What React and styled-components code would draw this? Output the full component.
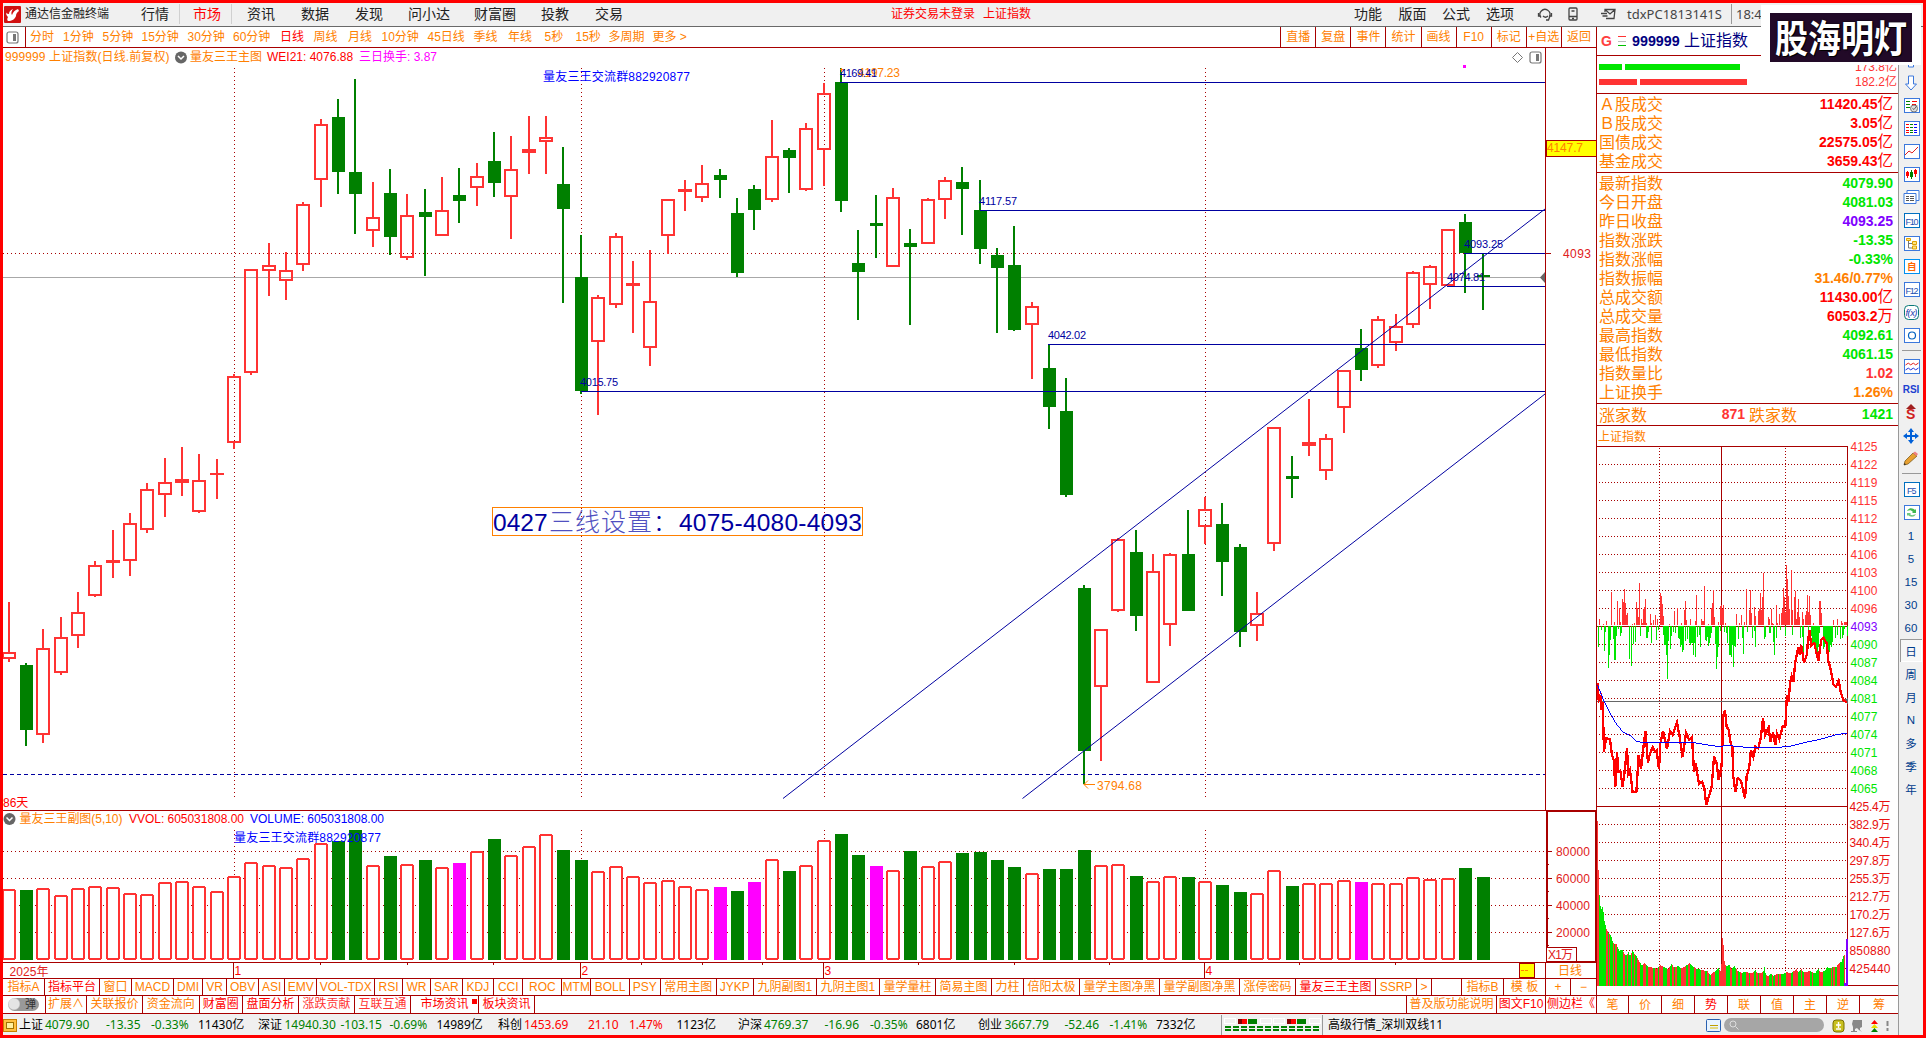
import * as React from 'react'
import styled, { createGlobalStyle } from 'styled-components'

const RED = '#ff3333'
const LINE = '#a80000'
const GREEN = '#008000'
const LIME = '#00e600'
const ORANGE = '#ff8000'
const NAVY = '#0000a0'
const SANS = '"Liberation Sans", "Noto Sans CJK SC", sans-serif'
const UI = '"Noto Sans", "Noto Sans CJK SC", sans-serif'

const GlobalStyle = createGlobalStyle`
  * { box-sizing: border-box; }
  body { margin: 0; background: #fff; }
  svg { display: block; flex: none; overflow: visible; }
  svg text { font-family: ${SANS}; font-size: 12px; }
`
const Frame = styled.div`
  position: relative;
  display: flex;
  flex-direction: column;
  width: 1926px;
  height: 1038px;
  overflow: hidden;
  border: 3px solid #f00;
  background: #fff;
  font: 12px/16px ${SANS};
  white-space: nowrap;
`
const MenuBar = styled.header`
  display: flex;
  flex: none;
  align-items: center;
  height: 24px;
  padding: 0 0 1px 1px;
  background: #f0f0f0;
  border-bottom: 1px solid #696969;
  color: #222;
`
const Brand = styled.div`
  display: flex;
  align-items: center;
  gap: 4px;
  width: 120px;
  font-size: 12px;
`
const MenuItem = styled.div`
  flex: none;
  width: ${p => p.$w}px;
  height: 20px;
  padding-left: ${p => p.$pad ?? 16}px;
  font-size: 14px;
  line-height: 20px;
  color: ${p => (p.$active ? '#f00' : '#222')};
  border-left: 1px solid ${p => (p.$active ? '#d0d0d0' : 'transparent')};
  border-right: 1px solid ${p => (p.$active ? '#d0d0d0' : 'transparent')};
`
const MenuNotice = styled.div`
  display: flex;
  gap: 8px;
  width: 460px;
  color: #f00;
`
const MenuIcon = styled.div`
  display: flex;
  align-items: center;
  width: ${p => p.$w}px;
`
const Account = styled.div`
  width: 105px;
  font: 13px/20px ${UI};
  color: #444;
  border-right: 1px solid #999;
`
const Clock = styled.div`
  padding-left: 4px;
  font: 13px/20px ${UI};
  color: #444;
`
const Body = styled.div`
  display: flex;
  flex: 1;
  min-height: 0;
`
const Main = styled.main`
  display: flex;
  flex-direction: column;
  width: 1895px;
`
const Workspace = styled.div`
  display: flex;
  height: 987px;
`
const ChartColumn = styled.section`
  display: flex;
  flex-direction: column;
  width: 1594px;
  border-right: 1px solid ${LINE};
`
const Toolbar = styled.nav`
  display: flex;
  align-items: center;
  height: 21px;
  border-bottom: 1px solid ${LINE};
  color: ${ORANGE};
`
const ToolIcon = styled.div`
  display: flex;
  align-items: center;
  width: 23px;
  height: 20px;
  padding-left: 3px;
  border-right: 1px solid ${LINE};
`
const Period = styled.div`
  width: ${p => p.$w}px;
  color: ${p => (p.$active ? '#f00' : ORANGE)};
`
const Periods = styled.div`
  display: flex;
  flex: 1;
  padding-left: 4px;
`
const ToolButton = styled.div`
  width: 35.1px;
  height: 20px;
  line-height: 20px;
  text-align: center;
  border-left: 1px solid ${LINE};
`
const InfoLine = styled.div`
  display: flex;
  height: 19px;
`
const InfoText = styled.div`
  display: flex;
  align-items: center;
  width: 1543px;
  padding: 0 0 1px 2px;
  border-right: 1px solid ${LINE};
`
const Info = styled.span`
  width: ${p => p.$w}px;
  letter-spacing: ${p => p.$ls ?? 0}px;
  color: ${p => p.$color};
`
const InfoIcons = styled.div`
  display: flex;
  align-items: center;
  gap: 5px;
  margin-left: auto;
  padding-right: 3px;
`
const TabRow = styled.nav`
  display: flex;
  height: ${p => p.$h}px;
  line-height: ${p => p.$h - 1}px;
  border-bottom: 1px solid ${LINE};
  border-top: ${p => (p.$top ? `1px solid ${LINE}` : 'none')};
`
const Tab = styled.div`
  position: relative;
  flex: none;
  width: ${p => p.$w}px;
  overflow: hidden;
  text-align: center;
  border-right: ${p => (p.$last ? 'none' : `1px solid ${LINE}`)};
  color: ${p => (p.$tone === 'red' ? '#f00' : p.$tone === 'pink' ? RED : ORANGE)};
`
const NewMark = styled.i`
  position: absolute;
  top: 3px;
  right: 1px;
  width: 5px;
  height: 5px;
  background: #f00;
`
const Switch = styled.div`
  display: flex;
  justify-content: flex-end;
  align-items: center;
  width: 31px;
  height: 13px;
  margin: 2px 0 0 5px;
  padding-right: 3px;
  border-radius: 7px;
  background: radial-gradient(circle at 6px 6px, #e4e4e4 5px, #999 6.5px);
  font-size: 11px;
  color: #333;
`
const SidePanel = styled.aside`
  display: flex;
  flex-direction: column;
  width: 301px;
`
const QuoteHead = styled.div`
  display: flex;
  align-items: center;
  height: 29px;
  padding: 0 0 1px 4px;
  border-bottom: 1px solid ${LINE};
  color: #000080;
  font-size: 16px;
  b { width: 52px; font-size: 14.3px; }
`
const HeadFlag = styled.span`
  width: 17px;
  font-size: 14px;
  font-weight: bold;
  color: #ff4040;
`
const HeadLines = styled.span`
  width: 8px;
  height: 10px;
  margin-right: 6px;
  border-top: 1px solid #ff3333;
  border-bottom: 1px solid #00c000;
  background: linear-gradient(#bbb, #bbb) 0 4px / 8px 1px no-repeat;
`
const FlowBlock = styled.div`
  height: 38px;
  padding: 3px 1px 0 2px;
  border-bottom: 1px solid ${LINE};
`
const FlowRow = styled.div`
  display: flex;
  align-items: center;
  gap: 3px;
  height: 15px;
  color: ${RED};
  span { margin-left: auto; }
`
const FlowBar = styled.i`
  width: ${p => p.$w}px;
  height: 6px;
  background: ${p => p.$color};
`
const QuoteGroup = styled.div`
  height: ${p => p.$h}px;
  border-bottom: 1px solid ${LINE};
`
const QuoteRow = styled.div`
  display: flex;
  justify-content: space-between;
  align-items: center;
  height: 19px;
  padding: 0 5px 0 2px;
`
const QuoteLabel = styled.span`
  font: 16px/19px "Noto Sans CJK SC", sans-serif;
  color: ${ORANGE};
`
const QuoteValue = styled.span`
  font-size: 14px;
  font-weight: bold;
  color: ${p => p.$color};
  small { font-size: 15.5px; font-weight: 400; }
`
const Breadth = styled(QuoteRow)`
  height: 20px;
  ${QuoteValue}:nth-child(2) { width: 98px; text-align: right; margin-right: 4px; }
  ${QuoteValue}:last-child { margin-left: auto; }
  justify-content: flex-start;
`
const MiniTitle = styled.div`
  height: 20px;
  padding-left: 1px;
  line-height: 23px;
  color: ${ORANGE};
`
const StatusBar = styled.footer`
  display: flex;
  align-items: center;
  height: 21px;
  padding-top: 1px;
  background: #f0f0f0;
  font: 12px/20px ${UI};
  color: #000;
`
const StatusCell = styled.span`
  flex: none;
  width: ${p => p.$w}px;
  color: ${p => p.$color || '#000'};
`
const Link = styled.div`
  width: 334px;
  margin-left: 1px;
  padding-left: 5px;
  border-left: 1px solid #999;
`
const Search = styled.div`
  display: flex;
  flex: none;
  align-items: center;
  width: 100px;
  height: 14px;
  margin: 0 8px 0 3px;
  padding-left: 5px;
  border-radius: 7px;
  background: #a6a6a6;
`
const Rail = styled.aside`
  display: flex;
  flex-direction: column;
  align-items: center;
  width: 25px;
  padding-top: 21px;
  background: #f0f0f0;
  border-left: 1px solid #999;
`
const RailItem = styled.div`
  display: flex;
  flex: none;
  align-items: center;
  justify-content: center;
  width: 22px;
  height: 23px;
  font: ${p => (p.$bold ? 'bold 10px' : '11.5px')} ${SANS};
  color: ${p => (p.$bold ? '#2040d0' : '#003c8c')};
  background: ${p => (p.$active ? '#f7f7f7' : 'none')};
  box-shadow: ${p => (p.$active ? 'inset 1px 1px #999, inset -1px -1px #fff' : 'none')};
`
const RailLine = styled.i`
  flex: none;
  width: 19px;
  height: 1px;
  margin: 3px 0 4px;
  background: #999;
`
const Watermark = styled.div`
  position: absolute;
  top: 2px;
  left: 1758px;
  width: 160px;
  height: 60px;
  padding: 8px 9px 3px;
  background: #fff;
`
const WatermarkText = styled.div`
  height: 49px;
  background: #220a28;
  font: 700 33px/47px "Noto Sans CJK SC", sans-serif;
  text-align: center;
  color: #fff;
  text-shadow: 0 0 2px #000, 1px 1px 0 #000;
  span { display: inline-block; transform: scaleY(1.14); }
`

// [high, body top, body bottom, low, down?]
const CANDLES = [
  [602, 652, 659, 662], [663, 665, 730, 746, 1], [629, 648, 735, 743], [617, 637, 673, 675], [592, 612, 636, 648],
  [561, 565, 596, 597], [530, 560, 563, 578], [513, 523, 561, 576], [483, 489, 530, 533], [458, 482, 495, 517],
  [447, 479, 483, 496], [454, 480, 512, 513], [459, 473, 475, 499], [374, 376, 443, 449], [269, 269, 373, 375],
  [243, 265, 271, 296], [252, 270, 281, 300], [202, 204, 265, 271], [119, 124, 180, 207], [99, 117, 172, 194, 1],
  [79, 172, 194, 234, 1], [182, 217, 231, 247], [169, 193, 237, 255, 1], [194, 215, 258, 260], [189, 212, 217, 276, 1],
  [177, 210, 236, 236], [168, 195, 201, 223, 1], [163, 176, 188, 206], [132, 161, 183, 197, 1], [136, 169, 197, 239],
  [116, 149, 153, 174], [116, 137, 142, 174], [147, 184, 209, 303, 1], [235, 277, 391, 394, 1], [295, 297, 342, 415],
  [233, 236, 305, 308], [261, 283, 286, 333], [250, 301, 348, 366], [199, 199, 236, 254], [180, 189, 192, 211],
  [165, 183, 198, 202], [169, 175, 180, 198, 1], [198, 213, 273, 277, 1], [185, 189, 210, 230, 1], [120, 156, 200, 202],
  [148, 150, 158, 193, 1], [123, 128, 190, 191], [83, 93, 150, 186], [68, 82, 201, 212, 1], [230, 263, 272, 320, 1],
  [195, 223, 226, 258, 1], [188, 197, 267, 267], [229, 243, 247, 325, 1], [198, 199, 244, 244], [177, 180, 200, 219],
  [167, 182, 189, 235, 1], [180, 210, 249, 264, 1], [248, 255, 268, 333, 1], [226, 265, 330, 331, 1], [302, 306, 325, 379],
  [344, 368, 407, 429, 1], [378, 411, 495, 497, 1], [585, 588, 751, 784, 1], [629, 629, 687, 761], [538, 539, 611, 612],
  [530, 552, 616, 631, 1], [554, 571, 683, 683], [553, 554, 625, 646], [510, 554, 611, 611, 1], [497, 509, 527, 544],
  [503, 524, 562, 596, 1], [544, 547, 632, 647, 1], [592, 613, 626, 641], [427, 427, 544, 551], [456, 476, 479, 498, 1],
  [399, 442, 446, 456], [434, 438, 471, 480], [370, 370, 408, 433], [329, 348, 370, 381, 1], [316, 319, 366, 368],
  [314, 326, 343, 351], [271, 272, 325, 328], [265, 266, 285, 309], [229, 229, 286, 286], [214, 222, 253, 293, 1],
  [253, 275, 277, 310, 1],
]

const VOLUME_TOPS = [
  890, 890, 889, 896, 889, 887, 888, 894, 895, 883, 882, 887, 892, 877, 863, 866, 868, 859, 844, 841, 830, 866, 856, 865,
  860, 868, 863, 852, 839, 856, 847, 835, 850, 860, 872, 867, 877, 883, 881, 887, 890, 887, 891, 882, 860, 871, 866, 841,
  834, 855, 866, 871, 851, 867, 862, 853, 852, 860, 867, 874, 869, 869, 850, 866, 865, 876, 882, 877, 877, 882, 885, 892,
  894, 871, 886, 884, 884, 881, 882, 884, 884, 878, 880, 879, 868, 877,
]
const VOLUME_GREEN = [1, 19, 20, 22, 24, 28, 32, 33, 42, 45, 48, 49, 52, 55, 56, 57, 58, 60, 61, 62, 65, 68, 70, 71, 74, 84, 85]
const VOLUME_MAGENTA = [26, 41, 43, 50, 78]

const PERIODS = [
  ['分时', 33], ['1分钟', 39.5], ['5分钟', 39], ['15分钟', 46], ['30分钟', 45.5], ['60分钟', 47], ['日线', 33.5], ['周线', 34.5],
  ['月线', 33.5], ['10分钟', 46], ['45日线', 46], ['季线', 34.5], ['年线', 36.5], ['5秒', 31], ['15秒', 33], ['多周期', 44], ['更多 >', 50],
]
const TOOLS = ['直播', '复盘', '事件', '统计', '画线', 'F10', '标记', '+自选', '返回']
const INDICATORS = [
  ['指标A', 42], ['指标平台', 55, 'red'], ['窗口', 32], ['MACD', 42], ['DMI', 29], ['VR', 24], ['OBV', 32.3], ['ASI', 25.7],
  ['EMV', 32.3], ['VOL-TDX', 58], ['RSI', 27.6], ['WR', 28.2], ['SAR', 31.8], ['KDJ', 31.2], ['CCI', 29.4], ['ROC', 39],
  ['MTM', 28.6], ['BOLL', 38.9], ['PSY', 30.9], ['常用主图', 56], ['JYKP', 37.1], ['九阴副图1', 62.9], ['九阴主图1', 63.2],
  ['量学量柱', 56], ['简易主图', 56], ['力柱', 32], ['倍阳太极', 56], ['量学主图净黑', 80], ['量学副图净黑', 80], ['涨停密码', 56],
  ['量友三王主图', 80, 'red'], ['SSRP', 41], ['>', 15], ['', 30], ['指标B', 42], ['模 板', 42], ['+', 25], ['−', 25],
]
const LINKS = [
  ['扩展∧', 41], ['关联报价', 56], ['资金流向', 56.5], ['财富圈', 43.5, 'red'], ['盘面分析', 56, 'red'], ['涨跌贡献', 56, 'pink'],
  ['互联互通', 56, 'pink'], ['市场资讯', 68, 'red'], ['板块资讯', 56, 'red'], ['', 872], ['普及版功能说明', 90], ['图文F10', 49, 'red'], ['侧边栏《', 50, 'red'],
]
const SIDE_TABS = ['笔', '价', '细', '势', '联', '值', '主', '逆', '筹']
const TURNOVER = [['Ａ股成交', '11420.45', '亿'], ['Ｂ股成交', '3.05', '亿'], ['国债成交', '22575.05', '亿'], ['基金成交', '3659.43', '亿']]
const QUOTES = [
  ['最新指数', '4079.90', '', LIME], ['今日开盘', '4081.03', '', LIME], ['昨日收盘', '4093.25', '', '#8000ff'],
  ['指数涨跌', '-13.35', '', LIME], ['指数涨幅', '-0.33%', '', LIME], ['指数振幅', '31.46/0.77%', '', ORANGE],
  ['总成交额', '11430.00', '亿', '#f00'], ['总成交量', '60503.2', '万', '#f00'], ['最高指数', '4092.61', '', LIME],
  ['最低指数', '4061.15', '', LIME], ['指数量比', '1.02', '', RED], ['上证换手', '1.26%', '', ORANGE],
]
const STATUS = [
  ['上证', 26], ['4079.90', 61, 'g'], ['-13.35', 45, 'g'], ['-0.33%', 47, 'g'], ['11430亿', 60],
  ['深证', 26.5], ['14940.30', 56, 'g'], ['-103.15', 49, 'g'], ['-0.69%', 47, 'g'], ['14989亿', 61.5],
  ['科创', 26], ['1453.69', 64, 'r'], ['21.10', 41, 'r'], ['1.47%', 47.5, 'r'], ['1123亿', 61.5],
  ['沪深', 26], ['4769.37', 60.5, 'g'], ['-16.96', 45.5, 'g'], ['-0.35%', 46, 'g'], ['6801亿', 62],
  ['创业', 26.5], ['3667.79', 60, 'g'], ['-52.46', 45, 'g'], ['-1.41%', 46.5, 'g'], ['7332亿', 63],
]
const MINI_AXIS = [
  '4125', '4122', '4119', '4115', '4112', '4109', '4106', '4103', '4100', '4096', '4093', '4090', '4087', '4084', '4081', '4077',
  '4074', '4071', '4068', '4065', '425.4万', '382.9万', '340.4万', '297.8万', '255.3万', '212.7万', '170.2万', '127.6万', '850880', '425440',
]

// minute bars in thirds of a pixel, x and far end
const UP_TICKS = '10,177 12,189 22,192 31,183 48,96 55,186 64,123 70,145 74,186 79,117 82,126 85,87 88,129 91,165 94,160 109,192 115,189 121,126 124,145 127,171 130,69 136,177 139,189 142,148 145,141 148,117 151,190 163,162 166,189 172,180 178,165 184,177 193,99 196,108 199,132 202,168 220,192 235,153 244,145 256,190 265,150 268,123 271,181 283,177 298,183 301,105 316,177 319,183 322,183 325,78 337,192 346,145 349,129 352,90 355,171 367,187 373,138 376,136 379,148 382,135 388,190 421,162 430,189 436,165 445,186 451,87 460,151 463,90 466,160 475,141 478,168 487,153 490,147 493,99 496,150 499,111 502,39 517,172 520,178 526,147 529,190 532,192 541,135 544,190 550,163 556,160 559,148 562,84 565,111 568,156 571,15 574,57 577,108 580,148 586,30 589,151 595,111 598,93 601,177 604,157 607,117 610,172 619,157 622,178 628,165 631,153 634,105 637,157 640,108 643,165 652,190 670,123 673,123 676,160 712,180 724,177 736,183 739,189 745,186 748,186 751,186'
const DOWN_TICKS = '7,260 16,210 25,273 28,217 37,323 40,285 43,240 52,237 55,299 58,300 61,229 67,208 73,229 76,220 100,297 106,318 112,252 118,246 133,228 151,234 154,234 157,217 166,250 181,240 187,210 202,225 205,255 208,255 211,285 214,356 217,243 223,267 226,228 232,217 238,220 247,234 250,237 253,261 256,255 259,276 262,270 268,243 274,237 280,249 283,255 286,250 289,249 292,285 295,249 298,291 304,230 310,225 313,261 328,241 331,243 334,230 337,258 340,250 343,234 346,220 358,252 361,326 364,291 367,261 373,214 385,217 391,220 394,249 400,285 403,285 406,291 409,255 412,320 415,258 418,261 427,237 439,234 442,282 454,217 469,234 475,214 478,261 505,237 508,232 520,220 523,220 532,246 535,285 541,234 553,210 568,228 589,225 613,234 619,231 622,288 637,240 646,228 649,252 652,255 655,258 658,276 661,265 664,279 667,260 670,220 682,267 685,261 688,249 691,267 694,261 697,273 700,275 703,255 706,262 709,246 718,234 724,225 733,237 739,234 742,225 745,208 754,228'
const PRICE_LINE = '5,368 8,420 14,410 17,450 20,425 24,575 30,535 42,538 48,585 53,600 58,680 63,575 67,635 73,632 80,680 87,625 93,565 97,640 102,630 110,697 121,697 128,585 135,628 148,512 156,608 162,580 170,562 177,575 182,570 189,628 193,550 201,513 213,567 222,513 230,525 243,487 250,525 260,592 270,518 280,540 288,532 294,635 299,610 309,672 318,665 325,685 331,735 340,705 347,680 354,590 362,610 368,660 375,630 378,600 381,470 387,452 392,500 398,510 405,555 409,560 412,650 418,695 425,655 435,662 447,715 452,650 460,620 465,570 472,590 478,560 487,565 495,530 501,473 507,525 518,503 523,545 531,518 538,555 543,520 550,537 560,500 568,500 571,440 573,405 578,425 582,370 587,350 592,365 598,305 607,262 612,285 616,257 624,308 632,285 640,210 646,257 655,250 667,302 676,238 682,232 692,250 697,302 705,332 712,372 720,380 728,362 735,400 742,420 752,428'
const AVERAGE_LINE = '5,375 22,420 40,455 60,490 80,515 103,527 122,544 140,548 180,549 225,549 260,547 295,548 330,554 365,559 400,557 440,561 490,562 550,562 585,558 630,547 680,536 720,524 753,520'
const MINUTE_VOLUME = [
  [9, 285], [13, 330], [19, 318], [24, 363], [29, 384], [35, 399], [44, 408], [50, 430], [60, 432], [68, 452], [78, 450], [88, 468],
  [96, 457], [101, 468], [108, 454], [118, 465], [128, 484], [136, 495], [144, 490], [155, 500], [180, 506], [192, 496], [208, 504],
  [216, 507], [225, 492], [232, 502], [245, 498], [256, 506], [270, 496], [279, 489], [288, 498], [300, 506], [315, 510], [332, 513],
  [341, 526], [355, 514], [366, 504], [374, 516], [379, 390], [383, 480], [388, 498], [399, 495], [405, 508], [414, 498], [422, 511],
  [435, 518], [450, 516], [460, 520], [472, 517], [477, 510], [482, 520], [500, 517], [504, 501], [508, 525], [515, 528], [522, 521],
  [530, 527], [540, 523], [560, 523], [571, 515], [580, 520], [590, 515], [600, 507], [605, 517], [614, 507], [622, 518], [640, 513],
  [655, 521], [665, 507], [672, 516], [685, 513], [692, 501], [700, 504], [720, 500], [728, 488], [735, 487], [742, 466], [747, 466],
]
const RED_RUNS = [
  [28, 33], [38, 41], [50, 53], [57, 62], [81, 86], [92, 94], [105, 107], [112, 115], [122, 130], [139, 147], [155, 170], [176, 183], [188, 200],
  [213, 220], [228, 231], [235, 241], [255, 269], [275, 281], [294, 298], [315, 324], [332, 336], [344, 356], [367, 387], [402, 406],
  [418, 424], [432, 437], [450, 457], [462, 472], [478, 484], [489, 500], [508, 516], [526, 529], [537, 543], [549, 554], [568, 584],
  [590, 603], [613, 616], [622, 639], [648, 650], [668, 680], [703, 706], [711, 715], [721, 730], [742, 747],
]

const parse = s => s.split(' ').map(p => p.split(',').map(Number))
const wickX = i => Math.round(9 + 17.34 * i - 1.4)

function Candle({ i, data }) {
  const [high, top, bottom, low, down] = data
  const x = wickX(i)
  if (down) {
    return <g fill={GREEN}>
      <rect x={x} y={high} width={2} height={low - high} />
      <rect x={x - 5} y={top} width={13} height={bottom - top} />
    </g>
  }
  const solid = bottom - top <= 4
  return <g fill={RED}>
    <rect x={x} y={high} width={2} height={top - high} />
    <rect x={x} y={bottom} width={2} height={low - bottom} />
    {solid
      ? <rect x={x - 6} y={top} width={14} height={bottom - top} />
      : <rect x={x - 5} y={top + 1} width={12} height={bottom - top - 2} fill="none" stroke={RED} strokeWidth={2} />}
  </g>
}

function Level({ x, y, w, label, dx = 0 }) {
  return <g>
    <path d={`M${x} ${y + 0.5}H1545`} stroke={NAVY} />
    <text x={x + dx} y={y - 5} fill={NAVY} style={{ fontSize: 11 }} textLength={w}>{label}</text>
  </g>
}

function Chevron({ x, y }) {
  return <g>
    <circle cx={x} cy={y} r={6} fill="#666" />
    <path d={`M${x - 3} ${y - 1.5}l3 3 3-3`} stroke="#fff" strokeWidth={1.5} fill="none" />
  </g>
}

function PriceChart() {
  return <svg width={1593} height={743} viewBox="3 67 1593 743" shapeRendering="crispEdges">
    <g stroke={LINE} strokeDasharray="1 3">
      {[234, 581, 824, 1205].map(x => <path key={x} d={`M${x + 0.5} 68V797`} />)}
      <path d="M3 253.5H1545" />
    </g>
    <path d="M3 277.5H1545" stroke="#a8a8a8" />
    {CANDLES.map((c, i) => <Candle key={i} i={i} data={c} />)}
    <text x={858} y={77} fill={ORANGE} textLength={42}>4197.23</text>
    <path d="M840 69h5M841 68v4" stroke={ORANGE} />
    <Level x={840} y={82} w={37} label="4169.41" />
    <Level x={980} y={210} w={38} dx={-1} label="4117.57" />
    <Level x={1048} y={344} w={38} label="4042.02" />
    <Level x={581} y={391} w={38} dx={-1} label="4015.75" />
    <Level x={1464} y={253} w={39} label="4093.25" />
    <Level x={1447} y={286} w={38} label="4074.81" />
    <g stroke={NAVY}>
      <path d="M783 798.5L1545 209M1022.5 798.5L1545 394" shapeRendering="auto" />
      <path d="M3 774.5H1545" strokeDasharray="4 3" />
    </g>
    <g shapeRendering="auto">
      <text x={543} y={80.5} fill="#00f" textLength={147} style={{ fontSize: 12 }}>量友三王交流群882920877</text>
      <rect x={492.5} y={507.5} width={370} height={28} fill="none" stroke={ORANGE} />
      <text x={493} y={530.5} fill={NAVY} style={{ fontSize: 24.5 }}>0427</text>
      <text x={549} y={531} fill="#5050c0" textLength={103} style={{ fontSize: 25, fontWeight: 300 }}>三线设置</text>
      <text x={653} y={531} fill={NAVY} style={{ fontSize: 24, fontWeight: 300 }}>：</text>
      <text x={679} y={530.5} fill={NAVY} textLength={183} style={{ fontSize: 24.5 }}>4075-4080-4093</text>
      <path d="M1095 784.5H1084m4-4l-4 4 4 4" stroke={ORANGE} fill="none" />
      <text x={1097} y={789.5} fill={ORANGE} textLength={45}>3794.68</text>
      <text x={3} y={807} fill="#f00">86天</text>
      <path d="M1545 272v11l-5-5.5z" fill="#666" />
      <text x={1563} y={258} fill="#e02020" textLength={28}>4093</text>
    </g>
    <rect x={1463} y={65} width={3} height={3} fill="#f0f" />
    <rect x={1546} y={140.5} width={50} height={16} fill="#ff0" stroke={LINE} />
    <text x={1547} y={152} fill={ORANGE} textLength={36}>4147.7</text>
    <path d="M1545.5 67V810M1545 253.5h6" stroke={LINE} />
  </svg>
}

function VolumeChart() {
  return <svg width={1593} height={169} viewBox="3 810 1593 169" shapeRendering="crispEdges">
    <path d="M3 810.5H1596M3 962.5H1596M3 978.5H1596M1545.5 962V979" stroke={LINE} />
    <g stroke={LINE} strokeDasharray="1 3">
      {[851, 878, 905, 932].map(y => <path key={y} d={`M3 ${y + 0.5}H1545`} />)}
      {[234, 581, 824, 1205].map(x => <path key={x} d={`M${x + 0.5} 830V960`} />)}
    </g>
    {VOLUME_TOPS.map((y, i) => {
      const x = wickX(i)
      const solid = VOLUME_GREEN.includes(i) ? GREEN : VOLUME_MAGENTA.includes(i) ? '#f0f' : null
      return solid
        ? <rect key={i} x={x - 5} y={y} width={13} height={960 - y} fill={solid} />
        : <rect key={i} x={x - 5} y={y} width={12} height={959 - y} rx={1.5} fill="#fff" stroke={RED} strokeWidth={2} />
    })}
    <g shapeRendering="auto">
      <Chevron x={9.5} y={819} />
      <text x={19.5} y={823} fill={ORANGE} textLength={103}>量友三王副图(5,10)</text>
      <text x={129} y={823} fill="#f00" textLength={115}>VVOL: 605031808.00</text>
      <text x={250} y={823} fill="#00f" textLength={134}>VOLUME: 605031808.00</text>
      <text x={234} y={842} fill="#00f" textLength={147}>量友三王交流群882920877</text>
    </g>
    <rect x={1547} y={811} width={49} height={151} fill="none" stroke={LINE} strokeWidth={2} />
    {[['80000', 851], ['60000', 878], ['40000', 905], ['20000', 932]].map(([t, y]) => <g key={t}>
      <path d={`M1547 ${y + 0.5}h5M1547 ${y + 13.5}h2`} stroke={LINE} />
      <text x={1556} y={y + 5} fill="#e02020" textLength={34}>{t}</text>
    </g>)}
    <rect x={1546.5} y={947.5} width={30} height={14} fill="#fff" stroke={LINE} />
    <text x={1548} y={959} fill="#e02020" textLength={25}>X1万</text>
    <text x={9.5} y={975.5} fill="#e02020" textLength={39}>2025年</text>
    {[[233, '1'], [580, '2'], [823, '3'], [1204, '4']].map(([x, t]) => <g key={t}>
      <path d={`M${x + 0.5} 963V978`} stroke={LINE} />
      <text x={x + 1.5} y={975} fill="#f00">{t}</text>
    </g>)}
    <path d="M320.5 963v2M407.5 963v2M493.5 963v2M641.5 963v2M702.5 963v2M762.5 963v2M918.5 963v2M1014.5 963v2M1109.5 963v2M1299.5 963v2M1395.5 963v2" stroke={LINE} />
    <rect x={1519.5} y={963.5} width={15} height={14} fill="#ff0" stroke={LINE} />
    <path d="M1521 970.5h3m1 0h3" stroke={ORANGE} />
    <text x={1558} y={975} fill={ORANGE}>日线</text>
  </svg>
}

function volumeAt(x) {
  const k = MINUTE_VOLUME.findIndex(p => p[0] >= x)
  if (k <= 0) return MINUTE_VOLUME[0][1]
  const [x0, y0] = MINUTE_VOLUME[k - 1]
  const [x1, y1] = MINUTE_VOLUME[k]
  return y0 + ((y1 - y0) * (x - x0)) / (x1 - x0)
}

function MinuteChart() {
  const bars = []
  for (let x = 9; x < 747; x += 3) {
    const red = RED_RUNS.some(([a, b]) => x >= a && x <= b)
    const top = Math.round(volumeAt(x) / 3) * 3
    bars.push(<rect key={x} x={x} y={top} width={3} height={557 - top} fill={red ? RED : LIME} />)
  }
  return <svg width={301} height={549} viewBox="1597 446 301 549" shapeRendering="crispEdges">
    <g stroke={LINE} strokeDasharray="1 2">
      {MINI_AXIS.map((t, i) => (i % 10 ? <path key={t} d={`M1599 ${446.5 + i * 18}H1847`} /> : null))}
      <path d="M1659.5 448V985M1785.5 448V985" />
    </g>
    <path d="M1597 446.5H1847.5V985.5M1597 626.5H1847M1597 806.5H1847M1847 985.5H1898M1721.5 446V985" stroke={LINE} fill="none" />
    <path d="M1597 701.5H1847" stroke="#666" />
    <g transform="translate(1596 560) scale(.33333)">
      {parse(UP_TICKS).map(([x, y], i) => <rect key={i} x={x - 1.5} y={y} width={3} height={195 - y} fill={RED} />)}
      {parse(DOWN_TICKS).map(([x, y], i) => <rect key={i} x={x - 1.5} y={199} width={3} height={y - 199} fill={LIME} />)}
      <path d="M757 411l-14 12 14 12z" fill="#666" />
      <polyline points={PRICE_LINE} fill="none" stroke="#f00" strokeWidth={7} />
      <polyline points={AVERAGE_LINE} fill="none" stroke="#00f" strokeWidth={3} />
    </g>
    <g transform="translate(1596 800) scale(.33333)">
      <rect x={3} y={63} width={3} height={494} fill={RED} />
      <rect x={6} y={210} width={3} height={347} fill={RED} />
      {bars}
      <path d="M744 549h6V417h6V557h-12z" fill="#8000ff" />
    </g>
    <g shapeRendering="auto">
      {MINI_AXIS.map((t, i) => <text
        key={t}
        x={i < 20 ? 1850.5 : 1849.5}
        y={450.5 + i * 18}
        fill={i < 10 || i > 19 ? (i > 19 ? '#e81010' : RED) : i === 10 ? '#8000ff' : LIME}
        textLength={i < 20 ? 27 : 41}
      >{t}</text>)}
    </g>
  </svg>
}

const PanelIcon = ({ s = 13 }) => <svg width={s} height={s} viewBox="0 0 13 13">
  <rect x="1" y="1" width="11" height="11" rx="2" fill="#fff" stroke="#777" strokeWidth="1.2" />
  <rect x="7" y="3" width="3" height="7" fill="#777" />
</svg>

const Box = ({ children, c = '#3c78dc' }) => <svg width="17" height="17" viewBox="0 0 17 17" fill="none">
  <rect x="1.5" y="1.5" width="15" height="14" fill="#fff" stroke={c} />
  {children}
</svg>

const boxText = { fontSize: 9 }

const RAIL_TOP = [
  <svg width="14" height="16" viewBox="0 0 14 16"><path d="M4.500 15V7H1.500L7 1l5.500 6h-3v8z" fill="#fff" stroke="#3c78dc" /></svg>,
  <svg width="14" height="16" viewBox="0 0 14 16"><path d="M4.500 1v8H1.500L7 15l5.500-6h-3V1z" fill="#fff" stroke="#3c78dc" /></svg>,
  <Box><path d="M3 4.500h4M3 7.500h4M3 10.500h4" stroke={GREEN} /><path d="M9 4.500h5M9 7.500h4" stroke="#f00" /><circle cx="11" cy="11.500" r="3.500" fill="#ddd" stroke="#777" /><path d="M9.500 11.500l1.500 1 3-4" stroke="#666" /></Box>,
  <Box><path d="M3 4.500h3M3 7.500h3M3 10.500h3M3 12.500h3" stroke="#f00" /><path d="M7 4.500h3M7 7.500h3M7 10.500h3M7 12.500h3" stroke={GREEN} /><path d="M11 4.500h3M11 7.500h3M11 10.500h3M11 12.500h3" stroke="#00f" /></Box>,
  <Box><path d="M2 12l4-4 3 2 6-6" stroke="#e02020" /></Box>,
  <Box><path d="M4.500 5v7M12.500 3v8" stroke="#f00" /><path d="M8.500 4v9" stroke={GREEN} /><path d="M3 6h3v4H3zM11 4h3v4h-3z" fill="#f00" /><path d="M7 6h3v5H7z" fill={GREEN} /></Box>,
  <svg width="17" height="17" viewBox="0 0 17 17"><path d="M4 1.500h12v10H4z" fill="#fff" stroke="#3c78dc" /><path d="M1 4.500h12v10H1z" fill="#fff" stroke="#3c78dc" /><path d="M3 7.500h3m1 0h4M3 9.500h3m1 0h4M3 11.500h3m1 0h4" stroke="#555" /></svg>,
  <Box c="#0070c0"><text x="2.500" y="12.500" fill="#1a50b0" style={boxText} textLength="13">F10</text></Box>,
  <Box><path d="M5.500 5v8h4M5.500 8.500h4" stroke="#777" /><path d="M3.500 3.500h4v2h-4zM9.500 6.500h4v3h-4zM9.500 11h4v3h-4z" fill="#ffe680" stroke="#e0a000" /></Box>,
  <Box c="#0090f0"><text x="4" y="12" fill="#f60" style={{ fontSize: 9.5, fontWeight: 700 }}>自</text></Box>,
  <Box><text x="2.500" y="12.500" fill="#1a50b0" style={boxText} textLength="13">F12</text></Box>,
  <svg width="17" height="17" viewBox="0 0 17 17"><rect x="1.500" y="1.500" width="14" height="14" rx="4" fill="#fff" stroke="#087878" /><text x="2.500" y="12" fill="#1a40b0" style={{ fontSize: 9.5, fontStyle: 'italic' }} textLength="12">f(x)</text></svg>,
  <Box><circle cx="9" cy="8.500" r="3.500" stroke="#0060c0" strokeWidth="1.200" /></Box>,
]
const RAIL_MID = [
  <Box><path d="M2.500 7l3-2 2 2 3-2 2 2 3-2" stroke="#e02020" /><path d="M2.500 12l3-2 2 2 3-2 2 2 3-2" stroke="#2030e0" /></Box>,
  'RSI',
  <svg width="16" height="17" viewBox="0 0 16 17"><path d="M3 5l5-5 5 5z" fill="#a02020" /><text x="3" y="15" fill="#d02020" style={{ fontSize: 14, fontWeight: 700 }}>S</text></svg>,
  <svg width="16" height="16" viewBox="0 0 16 16"><path d="M8 0l3 4H9v3h3V5l4 3-4 3V9H9v3h2l-3 4-3-4h2V9H4v2L0 8l4-3v2h3V4H5z" fill="#0060d8" /></svg>,
  <svg width="16" height="16" viewBox="0 0 16 16"><path d="M1 14l1-4 8-8 4 3-9 8z" fill="#e8a030" stroke="#806020" strokeWidth=".8" /><path d="M10 2l2-1.500 3 2.500-1.500 2z" fill="#f08080" /><path d="M1 14l.5-2 1.500 1.500z" fill="#222" /></svg>,
]
const RAIL_LOW = [
  <Box c="#0070c0"><text x="4" y="12.500" fill="#1a50b0" style={boxText} textLength="9.500">F5</text></Box>,
  <Box><path d="M4 7c2-4 6-3 8-1l1-1v4H9l1-1c-2-2-3-2-6-1z" fill="#40b850" /><path d="M13 10c-2 4-6 3-8 1l-1 1V9h4L7 10c2 2 3 1 6 0z" fill="#70c880" /></Box>,
  '1', '5', '15', '30', '60', '日', '周', '月', 'N', '多', '季', '年',
]

function Meter() {
  return <svg width={100} height={17} viewBox="1219 1017 100 17" shapeRendering="crispEdges">
    <path d="M1219.500 1015V1035" stroke="#999" />
    {[1222, 1271].map(x => <g key={x}>
      <path d={`M${x + 0.5} 1018.500h11v5h-11zM${x + 36.500} 1018.500h11v5h-11z`} fill="none" stroke="#fff" />
      <path d={`M${x + 14} 1019h4v5h-4z`} fill="#800000" />
      <path d={`M${x + 18} 1019h5v5h-5z`} fill="#f00" />
      <path d={`M${x + 24} 1019h9v5h-9z`} fill={GREEN} />
    </g>)}
    <path d="M1223 1027h96M1223 1030h96" stroke={GREEN} strokeWidth={2} strokeDasharray="6 2" />
  </svg>
}

export default function App() {
  return <>
    <GlobalStyle />
    <Frame>
      <MenuBar>
        <Brand>
          <svg width="17" height="17" viewBox="0 0 17 17">
            <rect width="17" height="17" rx="1" fill="#d01010" />
            <path d="M2 6c0 3 1 4 2 5-1 2-1 3 0 4 4 0 7-2 8-5 0-2 1-4 3-5l-1-2c-3 1-5 3-6 6-1-1-1-3 1-6-3 1-4 3-4 5-2 0-3-1-3-2z" fill="#fff" />
          </svg>
          通达信金融终端
        </Brand>
        <MenuItem $w={55}>行情</MenuItem>
        <MenuItem $w={53} $pad={13} $active>市场</MenuItem>
        <MenuItem $w={54} $pad={14}>资讯</MenuItem>
        <MenuItem $w={54} $pad={14}>数据</MenuItem>
        <MenuItem $w={54} $pad={14}>发现</MenuItem>
        <MenuItem $w={66} $pad={13}>问小达</MenuItem>
        <MenuItem $w={66} $pad={13}>财富圈</MenuItem>
        <MenuItem $w={54} $pad={14}>投教</MenuItem>
        <MenuItem $w={311} $pad={14}>交易</MenuItem>
        <MenuNotice><span>证券交易未登录</span><span>上证指数</span></MenuNotice>
        <MenuItem $w={44.5} $pad={2}>功能</MenuItem>
        <MenuItem $w={44.5} $pad={2}>版面</MenuItem>
        <MenuItem $w={44} $pad={1}>公式</MenuItem>
        <MenuItem $w={53} $pad={1}>选项</MenuItem>
        <MenuIcon $w={31}>
          <svg width="16" height="16" viewBox="0 0 16 16" fill="none" stroke="#444" strokeWidth="1.300">
            <path d="M4 11.500a5 5 0 1 1 8.500-1M6 10c2 2 4 1 5 0M9 14h2.500l1.500-4" />
            <path d="M1.500 7v3h2M14.500 7v3h-2" />
          </svg>
        </MenuIcon>
        <MenuIcon $w={33}>
          <svg width="10" height="14" viewBox="0 0 10 14" fill="none" stroke="#444" strokeWidth="1.300">
            <rect x="1" y="1" width="8" height="12" rx="1" /><path d="M1 9.500h8M3.500 4h3M4 11.500h2" />
          </svg>
        </MenuIcon>
        <MenuIcon $w={26}>
          <svg width="15" height="12" viewBox="0 0 15 12" fill="none" stroke="#444" strokeWidth="1.300">
            <path d="M4 4V1.500h10L13 10.500H5M4 1.500l5 4.500 5-4.500M0 5.500h6M1.500 8h5" />
          </svg>
        </MenuIcon>
        <Account>tdxPC1813141S</Account>
        <Clock>18:4</Clock>
      </MenuBar>
      <Body>
        <Main>
          <Workspace>
            <ChartColumn>
              <Toolbar>
                <ToolIcon><PanelIcon /></ToolIcon>
                <Periods>
                  {PERIODS.map(([t, w]) => <Period key={t} $w={w} $active={t === '日线'}>{t}</Period>)}
                </Periods>
                {TOOLS.map(t => <ToolButton key={t}>{t}</ToolButton>)}
              </Toolbar>
              <InfoLine>
                <InfoText>
                  <Info $w={170} $color={ORANGE} $ls={0.1}>999999 上证指数(日线.前复权)</Info>
                  <svg width={15} height={13} viewBox="0 0 15 13"><Chevron x={6} y={6.5} /></svg>
                  <Info $w={77} $color={ORANGE}>量友三王主图</Info>
                  <Info $w={92} $color="#f00">WEI21: 4076.88</Info>
                  <Info $w={90} $color="#f0f">三日换手: 3.87</Info>
                  <InfoIcons>
                    <svg width="13" height="13" viewBox="0 0 13 13"><path d="M6.500 1.500l5 5-5 5-5-5z" fill="none" stroke="#777" /></svg>
                    <PanelIcon />
                  </InfoIcons>
                </InfoText>
              </InfoLine>
              <PriceChart />
              <VolumeChart />
              <TabRow $h={17}>
                {INDICATORS.map(([t, w, tone], i) => <Tab key={i} $w={w} $tone={tone} $last={i === INDICATORS.length - 1}>{t}</Tab>)}
              </TabRow>
              <TabRow $h={18}>
                <Tab $w={43}><Switch>弹</Switch></Tab>
                {LINKS.map(([t, w, tone], i) => <Tab key={i} $w={w} $tone={tone} $last={i === LINKS.length - 1}>
                  {t}{t === '市场资讯' && <NewMark />}
                </Tab>)}
              </TabRow>
            </ChartColumn>
            <SidePanel>
              <QuoteHead>
                <HeadFlag>G</HeadFlag><HeadLines /><b>999999</b>上证指数
              </QuoteHead>
              <FlowBlock>
                <FlowRow><FlowBar $w={23} $color={LIME} /><FlowBar $w={115} $color={LIME} /><span>173.8亿</span></FlowRow>
                <FlowRow><FlowBar $w={38} $color={RED} /><FlowBar $w={107} $color={RED} /><span>182.2亿</span></FlowRow>
              </FlowBlock>
              <QuoteGroup $h={79}>
                {TURNOVER.map(([l, v, u]) => <QuoteRow key={l}>
                  <QuoteLabel>{l}</QuoteLabel><QuoteValue $color="#f00">{v}<small>{u}</small></QuoteValue>
                </QuoteRow>)}
              </QuoteGroup>
              <QuoteGroup $h={231}>
                {QUOTES.map(([l, v, u, c]) => <QuoteRow key={l}>
                  <QuoteLabel>{l}</QuoteLabel><QuoteValue $color={c}>{v}<small>{u}</small></QuoteValue>
                </QuoteRow>)}
              </QuoteGroup>
              <QuoteGroup $h={22}>
                <Breadth>
                  <QuoteLabel>涨家数</QuoteLabel><QuoteValue $color={RED}>871</QuoteValue>
                  <QuoteLabel>跌家数</QuoteLabel><QuoteValue $color={LIME}>1421</QuoteValue>
                </Breadth>
              </QuoteGroup>
              <MiniTitle>上证指数</MiniTitle>
              <MinuteChart />
              <TabRow $h={19} $top>
                {SIDE_TABS.map((t, i) => <Tab key={t} $w={i === 0 ? 32 : i === 8 ? 38 : 33} $tone={t === '势' && 'red'} $last={i === 8}>{t}</Tab>)}
              </TabRow>
            </SidePanel>
          </Workspace>
          <StatusBar>
            <StatusCell $w={16}>
              <svg width="14" height="13" viewBox="0 0 14 13">
                <rect x=".5" y=".5" width="13" height="12" fill="#ffc040" stroke="#c88000" />
                <rect x="3.500" y="3.500" width="7" height="6" fill="#fff0a0" stroke="#a07000" />
              </svg>
            </StatusCell>
            {STATUS.map(([t, w, c]) => <StatusCell key={t} $w={w} $color={c === 'g' ? GREEN : c === 'r' ? '#f00' : ''}>{t}</StatusCell>)}
            <StatusCell $w={2} />
            <Meter />
            <Link>高级行情_深圳双线11</Link>
            <StatusCell $w={57} />
            <svg width="15" height="13" viewBox="0 0 15 13">
              <rect x=".5" y=".5" width="14" height="12" rx="1" fill="#e8f4ff" stroke="#2860b0" /><path d="M4 6.500h8" stroke="#c0a000" /><path d="M4 9h8" stroke="#e0c000" />
            </svg>
            <Search>
              <svg width="10" height="10" viewBox="0 0 10 10" fill="none" stroke="#ddd"><circle cx="4" cy="4" r="3" /><path d="M6.500 6.500l3 3" /></svg>
            </Search>
            <svg width="66" height="15" viewBox="0 0 66 15">
              <rect x="1" y="2" width="11" height="12" rx="3" fill="#c8c020" stroke="#787000" /><path d="M6.500 4v6M4 7h5M4 11h5" stroke="#fff" strokeWidth="1.400" />
              <path d="M21 2h9v7l-2 1v2l2 2-3-2-2-2-2 1v2h2v1h-6v-1h2V9l-1-3z" fill="#888" />
              <path d="M39 6l3.500-4L46 6z" fill="#f00" /><path d="M39 10l3.500-4 3.500 4z" fill="#e8e000" /><path d="M39 14l3.500-4 3.500 4z" fill={GREEN} />
              <path d="M55.500 3v5M55.500 10v3" stroke="#888" strokeWidth="2" />
            </svg>
          </StatusBar>
        </Main>
        <Rail>
          {RAIL_TOP.map((icon, i) => <RailItem key={i}>{icon}</RailItem>)}
          <RailLine />
          {RAIL_MID.map((icon, i) => <RailItem key={i} $bold={icon === 'RSI'}>{icon}</RailItem>)}
          <RailLine />
          {RAIL_LOW.map((icon, i) => <RailItem key={i} $active={icon === '日'}>{icon}</RailItem>)}
        </Rail>
      </Body>
      <Watermark><WatermarkText><span>股海明灯</span></WatermarkText></Watermark>
    </Frame>
  </>
}
